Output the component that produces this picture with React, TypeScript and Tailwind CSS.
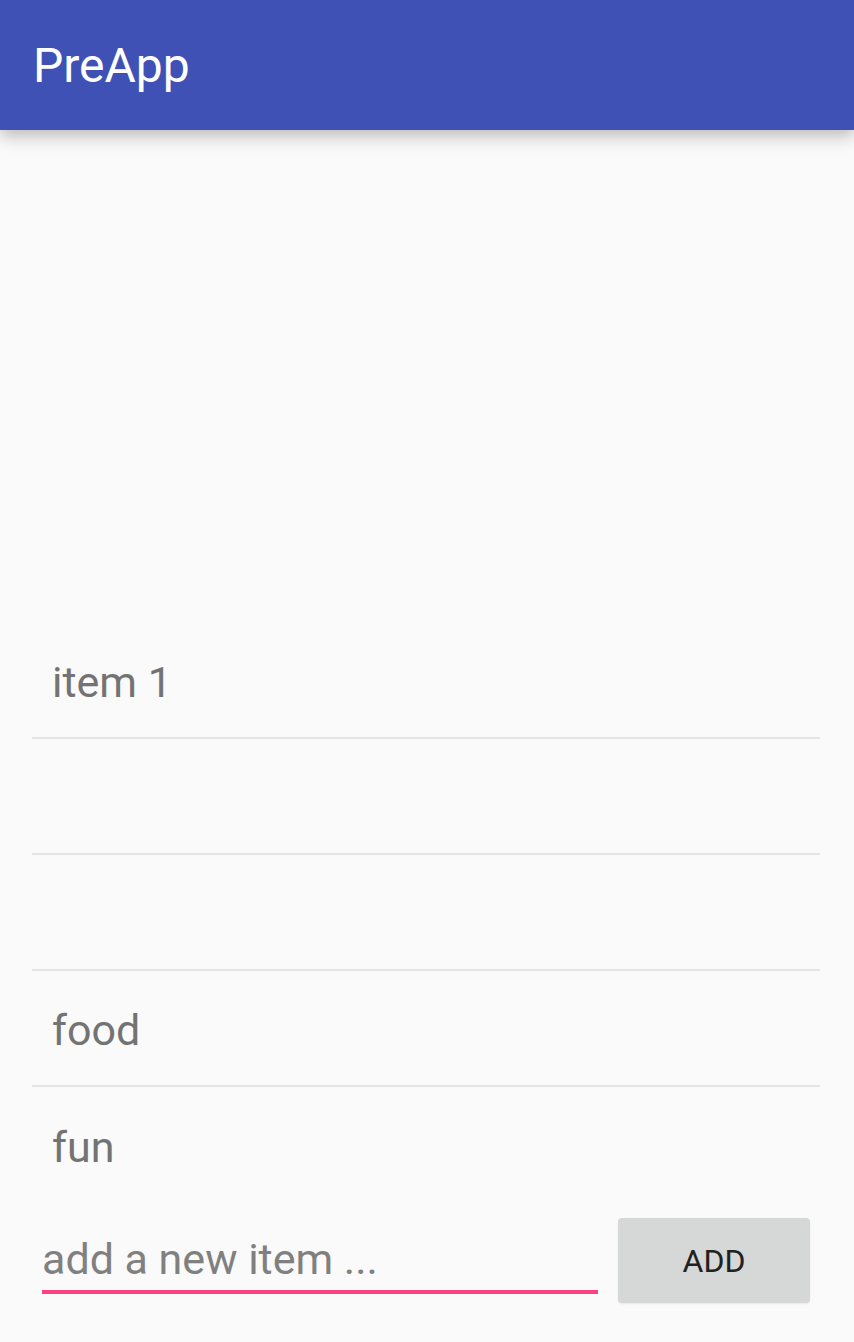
import { useState } from "react";

const App = () => {
  const [items] = useState(["item 1", "", "", "food", "fun"]);
  const [text, setText] = useState("");

  return (
    <div
      className="w-full h-screen flex flex-col bg-[#fafafa] overflow-hidden"
      style={{ fontFamily: "Roboto, 'Liberation Sans', sans-serif" }}>
      <header className="h-[130px] shrink-0 bg-[#3f51b5] flex items-center pl-[33px] shadow-[0_6px_16px_rgba(0,0,0,0.26)] relative z-10">
        <h1 className="text-white text-[48px] leading-none pt-[2px]">PreApp</h1>
      </header>
      <main className="flex-1 flex flex-col justify-end">
        <ul className="px-[32px] pr-[34px]">
          {items.map((item, i) => (
            <li
              key={i}
              className={
                i < items.length - 1
                  ? "h-[116px] flex items-center pl-[20px] pt-[4px] text-[43px] text-[#737373] border-b-2 border-[#e4e4e4]"
                  : "h-[116px] flex items-center pl-[20px] pt-[4px] text-[43px] text-[#737373]"
              }>
              {item}
            </li>
          ))}
        </ul>
        <div className="h-[139px] flex items-start pl-[42px] pr-[44px] pt-[15px]">
          <div className="w-[556px] pt-[10px]">
            <input
              type="text"
              value={text}
              onChange={(e) => setText(e.target.value)}
              placeholder="add a new item ..."
              className="w-full bg-transparent outline-none text-[43px] leading-[62px] h-[66px] text-[#333] placeholder:text-[#808080] border-b-4 border-[#ff4081]"
            />
          </div>
          <button className="ml-auto w-[192px] h-[85px] bg-[#d6d7d7] rounded-[4px] text-[32px] text-[#212121] shadow-[0_1px_2px_rgba(0,0,0,0.08)]">
            ADD
          </button>
        </div>
      </main>
    </div>
  );
};

export default App;
